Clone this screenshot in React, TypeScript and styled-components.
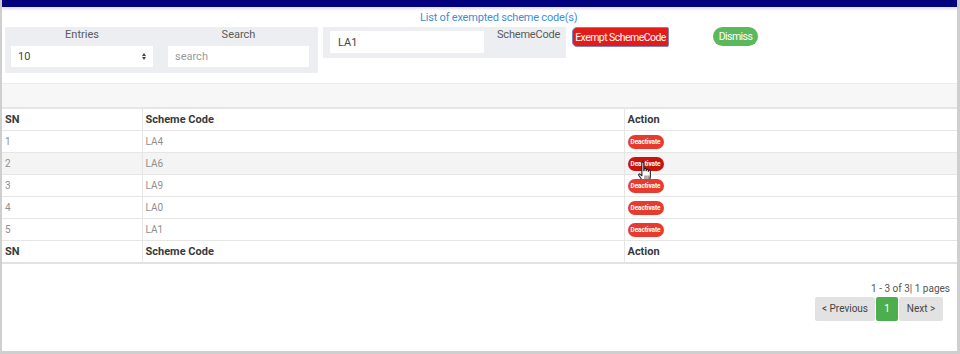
import { FC } from "react";
import styled, { createGlobalStyle } from "styled-components";

const GlobalStyle = createGlobalStyle`
  html, body {
    margin: 0;
    padding: 0;
    background: #fff;
  }
  body {
    font-family: Roboto, "Liberation Sans", sans-serif;
  }
`;

const Frame = styled.div`
  box-sizing: border-box;
  width: 960px;
  height: 354px;
  border-left: 2px solid #cfcfcf;
  border-right: 3px solid #cfcfcf;
  border-bottom: 3px solid #cfcfcf;
  background: #fff;
  display: flex;
  flex-direction: column;
`;

const TopBar = styled.div`
  height: 7px;
  background: #02027e;
  box-shadow: 0 2px 3px rgba(60, 60, 170, 0.18);
`;

const Toolbar = styled.div`
  display: flex;
  align-items: flex-start;
  height: 76px;
  padding-left: 3px;
`;

const FilterPanel = styled.div`
  margin-top: 20px;
  width: 313px;
  box-sizing: border-box;
  padding: 1px 9px 6px 6px;
  background: #eceef1;
  display: grid;
  grid-template-columns: 142px 141px;
  column-gap: 15px;
`;

const Field = styled.div`
  display: flex;
  flex-direction: column;
`;

const FieldLabel = styled.div`
  font-size: 11px;
  line-height: 14px;
  color: #5a5a5a;
  text-align: center;
  margin-bottom: 4px;
`;

const Box = styled.div<{ $muted?: boolean }>`
  height: 21px;
  background: #fff;
  display: flex;
  align-items: center;
  justify-content: space-between;
  padding: 0 7px;
  font-size: 11px;
  color: ${(p) => (p.$muted ? "#9a9a9a" : "#444")};
`;

const Arrows = styled.span`
  display: flex;
  flex-direction: column;
  gap: 1px;
  &::before,
  &::after {
    content: "";
    width: 0;
    height: 0;
    border-left: 2.5px solid transparent;
    border-right: 2.5px solid transparent;
  }
  &::before {
    border-bottom: 3px solid #444;
  }
  &::after {
    border-top: 3px solid #444;
  }
`;

const ExemptColumn = styled.div`
  margin-left: 5px;
  width: 243px;
  display: flex;
  flex-direction: column;
`;

const ListTitle = styled.div`
  margin-top: 4px;
  padding-left: 97px;
  font-size: 11px;
  line-height: 14px;
  letter-spacing: -0.2px;
  color: #3f8ed4;
  white-space: nowrap;
`;

const CodePanel = styled.div`
  margin-top: 2px;
  height: 31px;
  box-sizing: border-box;
  padding: 4px 0 0 7px;
  background: #eceef1;
  display: flex;
  align-items: flex-start;
`;

const CodeInput = styled.div`
  width: 154px;
  height: 22px;
  box-sizing: border-box;
  background: #fff;
  padding: 0 8px;
  display: flex;
  align-items: center;
  font-size: 11px;
  color: #444;
`;

const CodeLabel = styled.div`
  margin-left: 13px;
  margin-top: -3px;
  font-size: 11px;
  line-height: 14px;
  letter-spacing: -0.2px;
  color: #5a5a5a;
`;

const ActionButton = styled.button<{ $tone: "red" | "green" }>`
  margin-top: 20px;
  height: ${(p) => (p.$tone === "red" ? "20px" : "19px")};
  padding: 0;
  font-family: Roboto, "Liberation Sans", sans-serif;
  font-size: 10.5px;
  letter-spacing: -0.55px;
  white-space: nowrap;
  color: #fff;
  cursor: pointer;
  ${(p) =>
    p.$tone === "red"
      ? `
    margin-left: 6px;
    width: 97px;
    background: #e31c19;
    border: 1px solid #7a86c8;
    border-radius: 5px 2px 2px 5px;
  `
      : `
    margin-left: 44px;
    width: 45px;
    background: #5cb85c;
    border: none;
    border-radius: 10px;
  `}
`;

const Band = styled.div`
  height: 23px;
  background: #f7f7f7;
  border-top: 1px solid #ececec;
  border-bottom: 1px solid #e6e6e6;
`;

const Table = styled.table`
  width: 100%;
  border-collapse: collapse;
  border-bottom: 2px solid #e2e2e2;
`;

const Row = styled.tr<{ $striped?: boolean }>`
  background: ${(p) => (p.$striped ? "#f4f4f4" : "#fff")};
`;

const Cell = styled.td<{ $head?: boolean; $width?: number }>`
  height: 22px;
  padding: 0 4px 0 3px;
  box-sizing: border-box;
  border-top: 1px solid #e6e6e6;
  border-left: 1px solid #e6e6e6;
  font-size: ${(p) => (p.$head ? "11px" : "10px")};
  font-weight: ${(p) => (p.$head ? 700 : 400)};
  color: ${(p) => (p.$head ? "#3a3a3a" : "#8f8f8f")};
  width: ${(p) => (p.$width ? `${p.$width}px` : "auto")};
  position: relative;
  &:first-child {
    border-left: none;
  }
`;

const Deactivate = styled.button<{ $hover?: boolean }>`
  width: 36px;
  height: 14px;
  padding: 0;
  border: none;
  border-radius: 7px;
  background: ${(p) => (p.$hover ? "#c8140f" : "#e83b2f")};
  color: #fff;
  font-family: Roboto, "Liberation Sans", sans-serif;
  font-size: 6.5px;
  font-weight: 700;
  letter-spacing: -0.1px;
  line-height: 14px;
  display: block;
`;

const Pointer = styled.svg`
  position: absolute;
  left: 12px;
  top: 8px;
  width: 17px;
  height: 23px;
  pointer-events: none;
`;

const Pager = styled.div`
  display: flex;
  flex-direction: column;
  align-items: flex-end;
  padding: 18px 7px 0 0;
`;

const PageInfo = styled.div`
  font-size: 10px;
  line-height: 14px;
  color: #555;
`;

const PageButtons = styled.div`
  margin: 1px 7px 0 0;
  display: flex;
  gap: 1px;
`;

const PageButton = styled.button<{ $active?: boolean; $width: number }>`
  width: ${(p) => p.$width}px;
  height: 24px;
  padding: 0;
  border: none;
  border-radius: 2px;
  background: ${(p) => (p.$active ? "#4cae4c" : "#e2e2e2")};
  color: ${(p) => (p.$active ? "#fff" : "#444")};
  font-family: Roboto, "Liberation Sans", sans-serif;
  font-size: 10px;
`;

const schemes = ["LA4", "LA6", "LA9", "LA0", "LA1"];

const HeadRow: FC = () => (
  <Row>
    <Cell $head $width={140}>SN</Cell>
    <Cell $head $width={482}>Scheme Code</Cell>
    <Cell $head>Action</Cell>
  </Row>
);

const App: FC = () => (
  <>
    <GlobalStyle />
    <Frame>
      <TopBar />
      <Toolbar>
        <FilterPanel>
          <Field>
            <FieldLabel>Entries</FieldLabel>
            <Box>
              10
              <Arrows />
            </Box>
          </Field>
          <Field>
            <FieldLabel>Search</FieldLabel>
            <Box $muted>search</Box>
          </Field>
        </FilterPanel>
        <ExemptColumn>
          <ListTitle>List of exempted scheme code(s)</ListTitle>
          <CodePanel>
            <CodeInput>LA1</CodeInput>
            <CodeLabel>SchemeCode</CodeLabel>
          </CodePanel>
        </ExemptColumn>
        <ActionButton $tone="red">Exempt SchemeCode</ActionButton>
        <ActionButton $tone="green">Dismiss</ActionButton>
      </Toolbar>
      <Band />
      <Table>
        <thead>
          <HeadRow />
        </thead>
        <tbody>
          {schemes.map((code, i) => (
            <Row key={code} $striped={i === 1}>
              <Cell>{i + 1}</Cell>
              <Cell>{code}</Cell>
              <Cell>
                <Deactivate $hover={i === 1}>Deactivate</Deactivate>
                {i === 1 && (
                  <Pointer viewBox="0 0 14 19">
                    <path
                      d="M4 1.5c0-.8 1.6-.8 1.6 0V8l.3-.1V6.6c0-.8 1.6-.8 1.6 0v1.4h.2V7.4c0-.8 1.6-.8 1.6 0v1h.2V8c0-.8 1.5-.8 1.5 0v5c0 2-1 3-1.5 4.5H5.3C4.6 16 3.3 14.6 1.5 12c-.6-.9.4-1.8 1.2-1L4 12.2Z"
                      fill="#fff"
                      stroke="#222"
                      strokeWidth="0.9"
                      strokeLinejoin="round"
                    />
                    <path d="M6.6 12v3M8.2 12v3M9.8 12v3" stroke="#222" strokeWidth="0.6" />
                  </Pointer>
                )}
              </Cell>
            </Row>
          ))}
        </tbody>
        <tfoot>
          <HeadRow />
        </tfoot>
      </Table>
      <Pager>
        <PageInfo>1 - 3 of 3| 1 pages</PageInfo>
        <PageButtons>
          <PageButton $width={60}>&lt; Previous</PageButton>
          <PageButton $width={22} $active>
            1
          </PageButton>
          <PageButton $width={44}>Next &gt;</PageButton>
        </PageButtons>
      </Pager>
    </Frame>
  </>
);

export default App;
